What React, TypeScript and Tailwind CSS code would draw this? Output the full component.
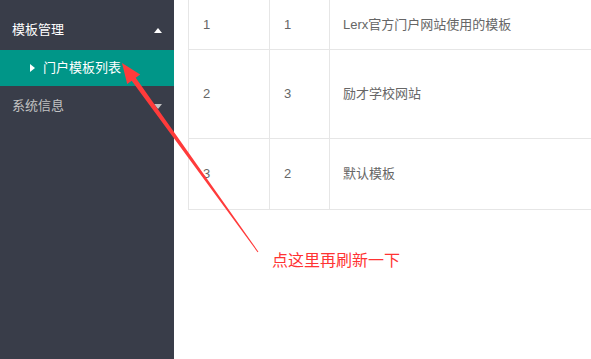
import React from "react";

const font = { fontFamily: '"Liberation Sans", "Noto Sans CJK SC", sans-serif' };

const rows = [
  { a: "1", b: "1", c: "Lerx官方门户网站使用的模板", h: "h-[50px]" },
  { a: "2", b: "3", c: "励才学校网站", h: "h-[89px]" },
  { a: "3", b: "2", c: "默认模板", h: "h-[71px]" },
];

export default function App() {
  return (
    <div className="relative flex w-[591px] h-[359px] overflow-hidden bg-white" style={font}>
      <aside className="w-[174px] shrink-0 bg-[#393D49] pt-[10px] text-[13px]">
        <div className="flex h-[40px] items-center justify-between pl-[12px] pr-[10px] text-white">
          <span>模板管理</span>
          <span className="block w-0 h-0 border-x-[4px] border-x-transparent border-b-[5px] border-b-white mr-[2px]" />
        </div>
        <div className="flex h-[36px] items-center bg-[#009688] pl-[30px] text-white">
          <span className="block w-0 h-0 border-y-[4px] border-y-transparent border-l-[5px] border-l-white mr-[8px]" />
          <span>门户模板列表</span>
        </div>
        <div className="flex h-[40px] items-center justify-between pl-[12px] pr-[10px] text-[#c2c2c2]">
          <span>系统信息</span>
          <span className="block w-0 h-0 border-x-[4px] border-x-transparent border-t-[5px] border-t-[#c2c2c2] mr-[2px]" />
        </div>
      </aside>
      <main className="flex-1 overflow-hidden pl-[14px]">
        <div className="w-[500px] border-l border-[#e6e6e6] text-[13px] text-[#666]">
          {rows.map((r) => (
            <div key={r.a} className={`flex ${r.h} border-b border-[#e6e6e6]`}>
              <div className="w-[81px] flex items-center border-r border-[#e6e6e6] pl-[14px]">{r.a}</div>
              <div className="w-[60px] flex items-center border-r border-[#e6e6e6] pl-[14px]">{r.b}</div>
              <div className="flex-1 flex items-center pl-[13px]">{r.c}</div>
            </div>
          ))}
        </div>
      </main>
      <svg className="absolute left-0 top-0 pointer-events-none" width="591" height="359">
        <polygon
          points="122,63 140.2,74.5 135.7,77.7 258.4,251.7 257.6,252.3 131.7,80.7 127.2,83.9"
          fill="#ff3b3b"
        />
      </svg>
      <div
        className="absolute left-[272px] top-[249px] text-[16px] leading-[20px] text-[#ff3333]"
        style={{ fontFamily: '"Noto Sans CJK SC", sans-serif' }}
      >
        点这里再刷新一下
      </div>
    </div>
  );
}
